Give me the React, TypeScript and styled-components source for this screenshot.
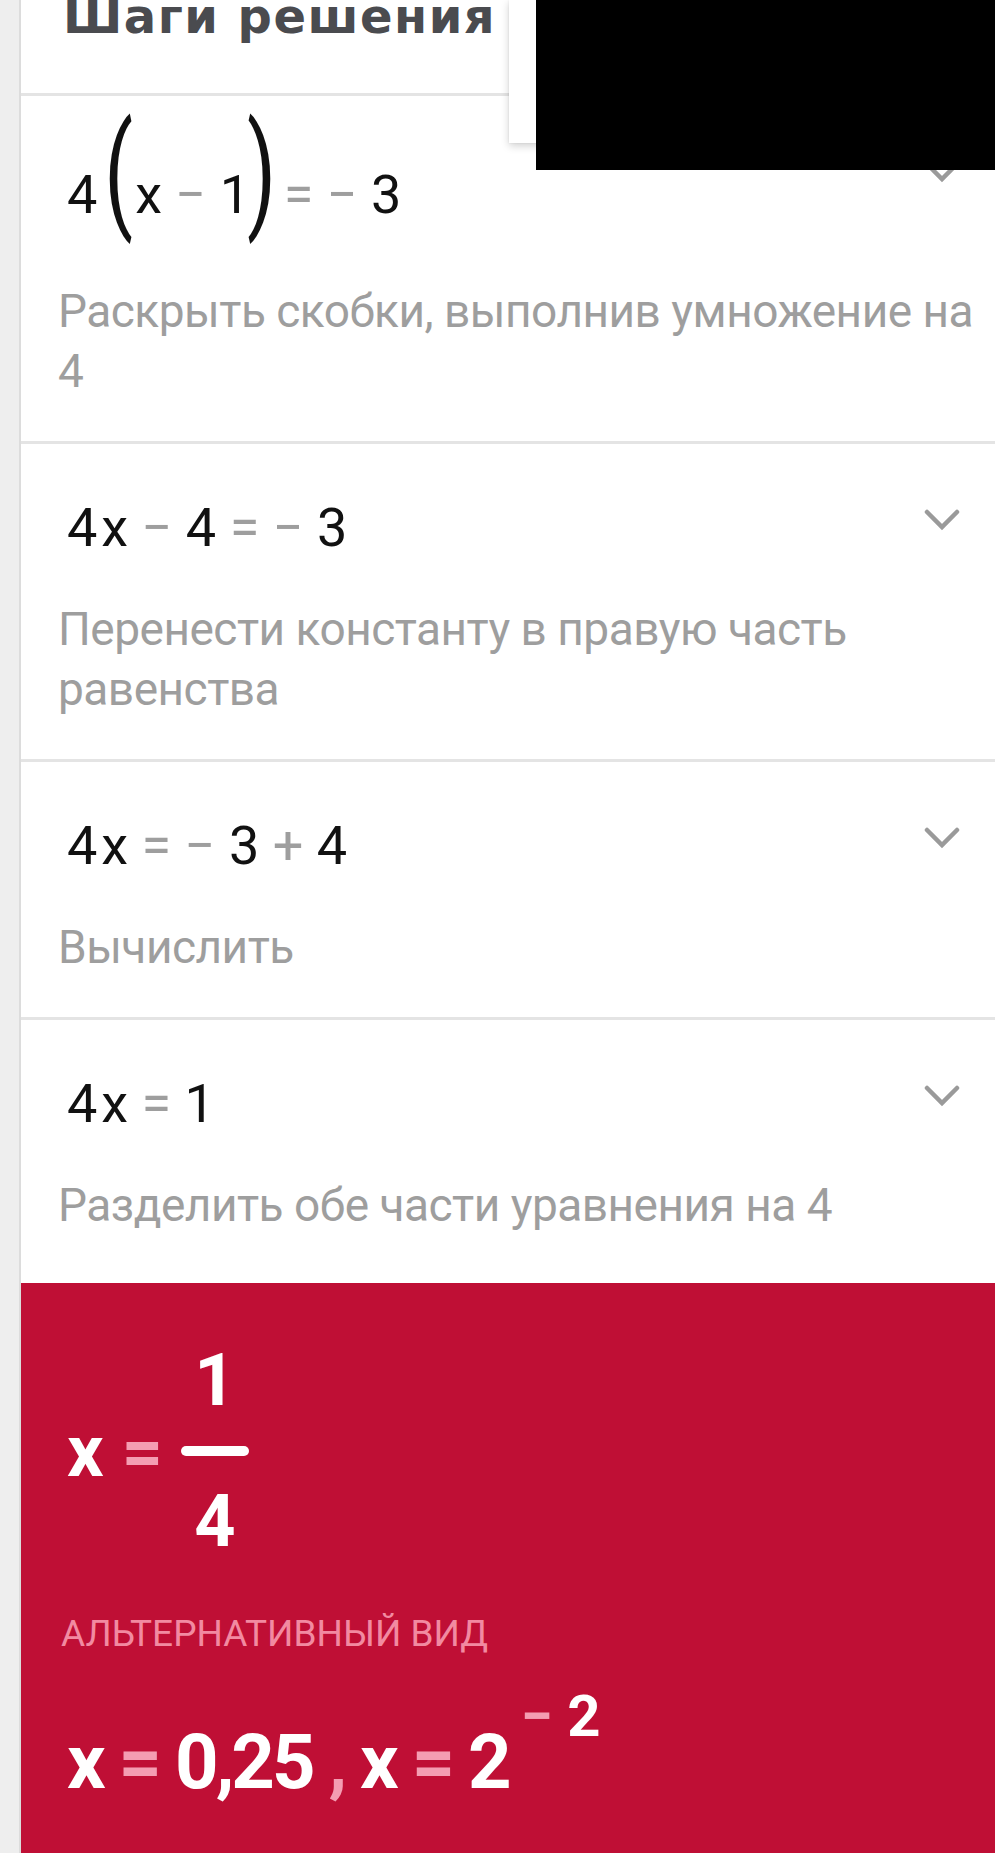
import React from "react";
import styled, { createGlobalStyle } from "styled-components";

const GlobalStyle = createGlobalStyle`
  html, body { margin: 0; padding: 0; background: #ffffff; }
  body { font-family: Roboto, "Noto Sans", "DejaVu Sans", sans-serif; }
  * { box-sizing: border-box; }
`;

const Page = styled.div`
  position: relative;
  display: flex;
  min-height: 1853px;
  overflow: hidden;
`;

const Rail = styled.div`
  flex: 0 0 21px;
  background: #eeeeee;
  border-right: 2px solid #dcdcdc;
`;

const Main = styled.main`
  flex: 1;
  display: flex;
  flex-direction: column;
  min-width: 0;
`;

const Header = styled.header`
  height: 96px;
  padding-left: 42px;
  border-bottom: 3px solid #e4e4e4;
  overflow: hidden;
`;

const Title = styled.h1`
  margin: -8px 0 0;
  font-family: "DejaVu Sans", Roboto, sans-serif;
  font-weight: 700;
  font-size: 48px;
  line-height: 48px;
  letter-spacing: 1.5px;
  color: #4a4b4f;
  white-space: nowrap;
`;

const Popup = styled.div`
  position: absolute;
  left: 509px;
  top: 0;
  width: 520px;
  height: 143px;
  background: #ffffff;
  box-shadow: 0 3px 8px rgba(0, 0, 0, 0.18), 0 0 2px rgba(0, 0, 0, 0.08);
`;

const Redaction = styled.div`
  position: absolute;
  left: 536px;
  top: 0;
  right: 0;
  height: 170px;
  background: #000000;
`;

const StepRow = styled.section<{ $last?: boolean }>`
  display: flex;
  flex-direction: column;
  padding: 52px 35px ${(p) => (p.$last ? "48px" : "40px")} 37px;
  border-bottom: ${(p) => (p.$last ? "none" : "3px solid #e4e4e4")};
`;

const StepHead = styled.div`
  display: flex;
  justify-content: space-between;
  align-items: flex-start;
`;

const MathLine = styled.div<{ $tall?: boolean }>`
  margin-left: 9px;
  height: ${(p) => (p.$tall ? "94px" : "64px")};
  font-family: Roboto, sans-serif;
  font-size: 54px;
  line-height: ${(p) => (p.$tall ? "94px" : "64px")};
  color: #111111;
  white-space: pre;
`;

const Num = styled.span`
  color: #111111;
`;

const Var = styled.span`
  color: #111111;
  margin-left: 4px;
`;

const Op = styled.span`
  color: #9e9e9e;
`;

const Paren = styled.span<{ $side: "open" | "close" }>`
  display: inline-block;
  font-size: 84px;
  line-height: 0;
  color: #111111;
  transform: translateY(-12px) scaleY(1.5);
  margin: ${(p) => (p.$side === "open" ? "0 2px 0 7px" : "0 -6px 0 -3px")};
`;

const Chevron = styled.svg`
  flex: 0 0 auto;
  margin-top: 13px;
  width: 36px;
  height: 22px;
`;

const Desc = styled.p`
  margin: 39px -20px 0 0;
  font-family: Roboto, sans-serif;
  font-size: 46px;
  line-height: 60px;
  letter-spacing: -0.5px;
  color: #9e9e9e;
`;

const Result = styled.section`
  flex: 1;
  display: flex;
  flex-direction: column;
  align-items: flex-start;
  background: #bf0f35;
  padding: 62px 0 41px 46px;
  color: #ffffff;
`;

const FractionLine = styled.div`
  display: flex;
  align-items: center;
  font-family: Roboto, sans-serif;
  font-weight: 700;
  font-size: 72px;
  line-height: 72px;
`;

const Pink = styled.span`
  color: #f49db2;
`;

const EqSign = styled(Pink)`
  margin: 0 18px;
`;

const Fraction = styled.span`
  display: inline-flex;
  flex-direction: column;
  align-items: center;
`;

const FracBar = styled.span`
  display: block;
  width: 68px;
  height: 10px;
  border-radius: 5px;
  background: #ffffff;
  margin: 29px 0 30px;
`;

const AltLabel = styled.div`
  margin: 53px 0 0 -6px;
  font-family: Roboto, sans-serif;
  font-size: 37px;
  line-height: 46px;
  letter-spacing: 0;
  color: #f28aa1;
`;

const AltLine = styled.div`
  margin-top: 59px;
  font-family: Roboto, sans-serif;
  font-weight: 700;
  font-size: 76px;
  line-height: 80px;
  letter-spacing: -3px;
  white-space: pre;
`;

const Sup = styled.span`
  font-size: 58px;
  line-height: 0;
  vertical-align: 52px;
  margin-left: 12px;
  letter-spacing: 0;
`;

const ChevronIcon = () => (
  <Chevron viewBox="0 0 36 22" aria-hidden="true">
    <polyline
      points="3,3 18,18 33,3"
      fill="none"
      stroke="#9a9a9a"
      strokeWidth="4.5"
      strokeLinecap="round"
      strokeLinejoin="miter"
    />
  </Chevron>
);

type Step = {
  math: React.ReactNode;
  desc: string;
  tall?: boolean;
};

const steps: Step[] = [
  {
    tall: true,
    math: (
      <>
        <Num>4</Num>
        <Paren $side="open">(</Paren>
        <Num>x</Num> <Op>−</Op> <Num>1</Num>
        <Paren $side="close">)</Paren> <Op>=</Op> <Op>−</Op> <Num>3</Num>
      </>
    ),
    desc: "Раскрыть скобки, выполнив умножение на 4",
  },
  {
    math: (
      <>
        <Num>4</Num>
        <Var>x</Var> <Op>−</Op> <Num>4</Num> <Op>=</Op> <Op>−</Op> <Num>3</Num>
      </>
    ),
    desc: "Перенести константу в правую часть равенства",
  },
  {
    math: (
      <>
        <Num>4</Num>
        <Var>x</Var> <Op>=</Op> <Op>−</Op> <Num>3</Num> <Op>+</Op> <Num>4</Num>
      </>
    ),
    desc: "Вычислить",
  },
  {
    math: (
      <>
        <Num>4</Num>
        <Var>x</Var> <Op>=</Op> <Num>1</Num>
      </>
    ),
    desc: "Разделить обе части уравнения на 4",
  },
];

export default function App() {
  return (
    <>
      <GlobalStyle />
      <Page>
        <Rail />
        <Main>
          <Header>
            <Title>Шаги решения</Title>
          </Header>
          {steps.map((s, i) => (
            <StepRow key={i} $last={i === steps.length - 1}>
              <StepHead>
                <MathLine $tall={s.tall}>{s.math}</MathLine>
                <ChevronIcon />
              </StepHead>
              <Desc>{s.desc}</Desc>
            </StepRow>
          ))}
          <Result>
            <FractionLine>
              <span>x</span>
              <EqSign>=</EqSign>
              <Fraction>
                <span>1</span>
                <FracBar />
                <span>4</span>
              </Fraction>
            </FractionLine>
            <AltLabel>АЛЬТЕРНАТИВНЫЙ ВИД</AltLabel>
            <AltLine>
              x <Pink>=</Pink> 0,25 <Pink>,</Pink> x <Pink>=</Pink> 2
              <Sup>
                <Pink>−</Pink> 2
              </Sup>
            </AltLine>
          </Result>
        </Main>
        <Popup />
        <Redaction />
      </Page>
    </>
  );
}
